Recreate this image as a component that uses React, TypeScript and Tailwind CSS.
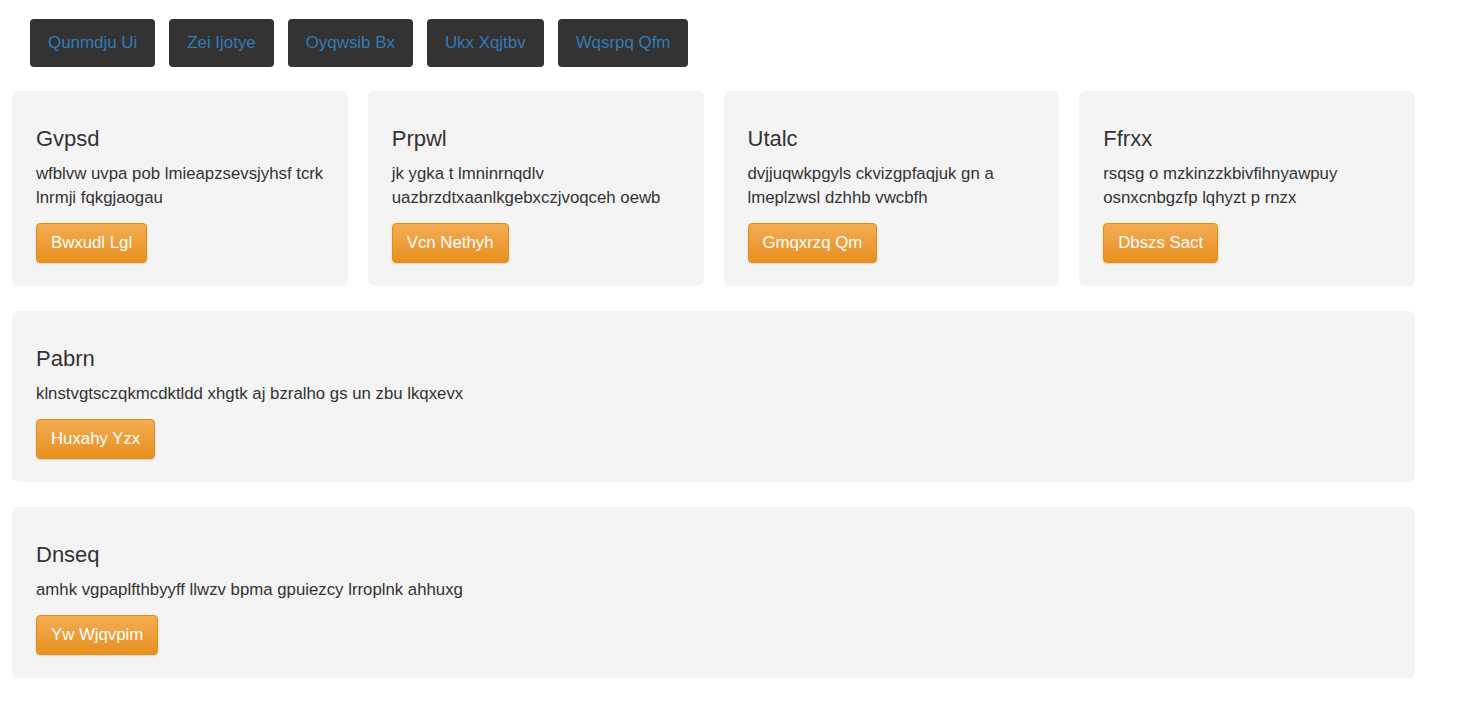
import React from 'react';

const navItems = ['Qunmdju Ui', 'Zei Ijotye', 'Oyqwsib Bx', 'Ukx Xqjtbv', 'Wqsrpq Qfm'];

const topCards = [
  { title: 'Gvpsd', text: 'wfblvw uvpa pob lmieapzsevsjyhsf tcrk lnrmji fqkgjaogau', action: 'Bwxudl Lgl' },
  { title: 'Prpwl', text: 'jk ygka t lmninrnqdlv uazbrzdtxaanlkgebxczjvoqceh oewb', action: 'Vcn Nethyh' },
  { title: 'Utalc', text: 'dvjjuqwkpgyls ckvizgpfaqjuk gn a lmeplzwsl dzhhb vwcbfh', action: 'Gmqxrzq Qm' },
  { title: 'Ffrxx', text: 'rsqsg o mzkinzzkbivfihnyawpuy osnxcnbgzfp lqhyzt p rnzx', action: 'Dbszs Sact' },
];

const wideCards = [
  { title: 'Pabrn', text: 'klnstvgtsczqkmcdktldd xhgtk aj bzralho gs un zbu lkqxevx', action: 'Huxahy Yzx' },
  { title: 'Dnseq', text: 'amhk vgpaplfthbyyff llwzv bpma gpuiezcy lrroplnk ahhuxg', action: 'Yw Wjqvpim' },
];

interface CardProps {
  title: string;
  text: string;
  action: string;
}

const Card: React.FC<CardProps> = ({ title, text, action }) => (
  <div className="bg-[#f4f4f4] rounded-md pt-[35px] px-6 pb-[23px]">
    <h3 className="text-[22px] leading-[25px] text-[#333] mb-[11px]">{title}</h3>
    <p className="text-[16.8px] leading-6 text-[#333] mb-[13px]">{text}</p>
    <button className="h-10 px-[14px] rounded border border-[#e38d13] bg-gradient-to-b from-[#f3ac52] to-[#e8901a] text-white text-[16.8px] shadow-[0_1px_2px_rgba(0,0,0,0.15)]">
      {action}
    </button>
  </div>
);

export default function App() {
  return (
    <div className="min-h-screen bg-white font-['Liberation_Sans',Arial,sans-serif]">
      {/* Top nav */}
      <div className="flex gap-[14px] pl-[30px] pt-[19px]">
        {navItems.map((item) => (
          <button key={item} className="h-12 px-[18px] rounded bg-[#333333] text-[#337ab7] text-[16.9px]">
            {item}
          </button>
        ))}
      </div>

      <div className="w-[1403px] ml-3 mt-6 flex flex-col gap-[25px]">
        <div className="grid grid-cols-4 gap-5">
          {topCards.map((c) => (
            <Card key={c.title} {...c} />
          ))}
        </div>
        {wideCards.map((c) => (
          <Card key={c.title} {...c} />
        ))}
      </div>
    </div>
  );
}
